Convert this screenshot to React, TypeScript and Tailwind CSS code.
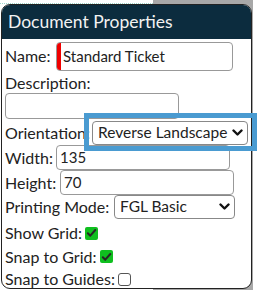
import React from 'react';

const font = { fontFamily: 'Lato, "Liberation Sans", sans-serif' };

function Chevron() {
  return (
    <svg width="11" height="8" viewBox="0 0 11 8" className="pointer-events-none absolute right-[4px] top-1/2 -translate-y-1/2">
      <path d="M1.5 1.5 L5.5 5.5 L9.5 1.5" fill="none" stroke="#111" strokeWidth="2.4" strokeLinecap="round" strokeLinejoin="round" />
    </svg>
  );
}

function Check({ checked }: { checked: boolean }) {
  if (!checked) {
    return <span className="inline-block w-[13px] h-[13px] rounded-[3px] border border-[#555] bg-white" />;
  }
  return (
    <span className="inline-flex items-center justify-center w-[13px] h-[13px] rounded-[2px] bg-[#0fbf1f]">
      <svg width="11" height="10" viewBox="0 0 11 10">
        <path d="M1.8 5.2 L4.3 7.7 L9.3 2" fill="none" stroke="#262626" strokeWidth="2" strokeLinecap="round" strokeLinejoin="round" />
      </svg>
    </span>
  );
}

export default function App() {
  return (
    <div className="relative w-[258px] h-[290px] bg-white overflow-hidden whitespace-nowrap" style={font}>
      <div className="absolute left-[153px] top-0 w-[100px] h-[290px] bg-[#a8a8a8]" />
      <div className="absolute left-0 top-[3px] w-[153px] border-t border-dotted border-[#9fd8d0]" />

      <div className="relative z-10 ml-[1px] mt-[4px] w-[251px] h-[285px] rounded-[9px] border border-[#222] bg-white text-[16px] text-[#222]">
        <div className="h-[34px] rounded-t-[8px] bg-[#0c2c3e] text-[#f2f2f2] px-[6px] flex items-center text-[17.5px]">
          Document Properties
        </div>

        <div className="px-[3px]">
          <div className="flex items-center h-[33px] pt-[1px]">
            <span className="w-[51px]">Name:</span>
            <div className="flex w-[177px] h-[29px] rounded-[4px] border border-[#999] overflow-hidden text-[15px]">
              <span className="w-[4px] bg-[#f00000]" />
              <span className="pl-[2px] flex items-center">Standard Ticket</span>
            </div>
          </div>

          <div className="h-[21px] leading-[21px]">Description:</div>
          <div className="h-[27px]">
            <div className="w-[174px] h-[26px] rounded-[4px] border border-[#999]" />
          </div>

          <div className="flex items-center h-[25px]">
            <span className="w-[87px]">Orientation:</span>
            <div className="relative w-[156px] h-[24px] rounded-[4px] border border-[#888] flex items-center pl-[5px] text-[15.5px]">
              Reverse Landscape
              <Chevron />
            </div>
          </div>

          <div className="flex items-center h-[25px]">
            <span className="w-[51px]">Width:</span>
            <div className="w-[174px] h-[25px] rounded-[4px] border border-[#999] flex items-center pl-[3px] text-[15px]">135</div>
          </div>

          <div className="flex items-center h-[25px]">
            <span className="w-[55px]">Height:</span>
            <div className="w-[174px] h-[25px] rounded-[4px] border border-[#999] flex items-center pl-[3px] text-[15px]">70</div>
          </div>

          <div className="flex items-center h-[24px]">
            <span className="w-[109px]">Printing Mode:</span>
            <div className="relative w-[121px] h-[24px] rounded-[4px] border border-[#888] flex items-center pl-[5px] text-[15.5px]">
              FGL Basic
              <Chevron />
            </div>
          </div>

          <div className="flex items-center gap-[3px] h-[26px] pt-[2px]">
            <span>Show Grid:</span>
            <Check checked />
          </div>
          <div className="flex items-center gap-[3px] h-[22px] pt-[1px]">
            <span>Snap to Grid:</span>
            <Check checked />
          </div>
          <div className="flex items-center gap-[3px] h-[22px] pt-[2px]">
            <span>Snap to Guides:</span>
            <Check checked={false} />
          </div>
        </div>
      </div>

      <div className="absolute z-20 left-[84px] top-[113px] w-[173px] h-[38px] border-[5px] border-[#4a9bd1]" />
    </div>
  );
}
